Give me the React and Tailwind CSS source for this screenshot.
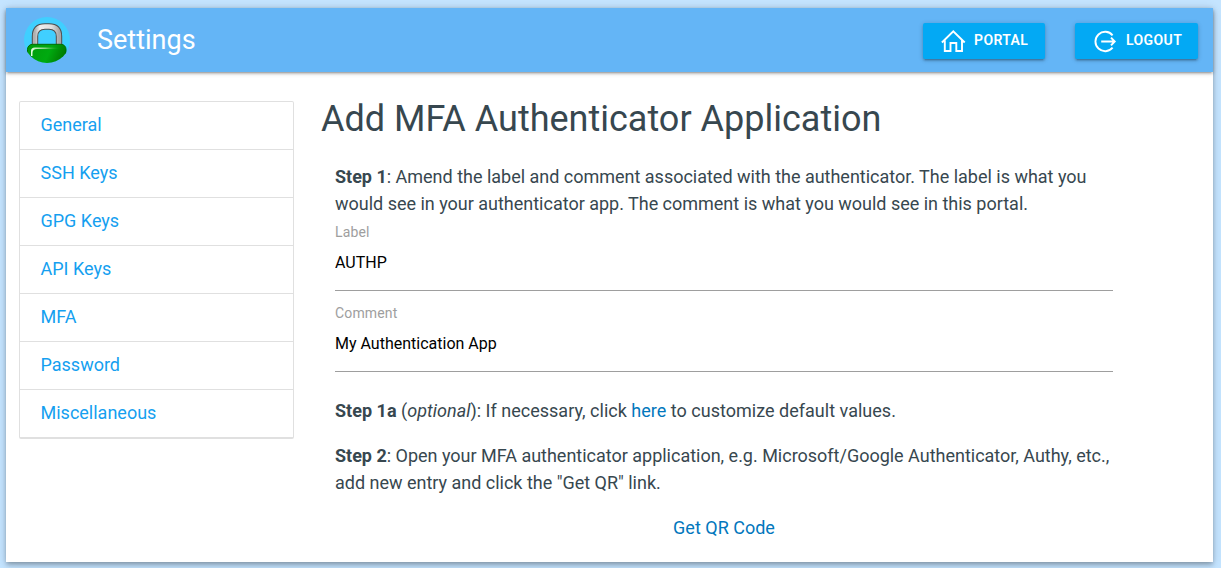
import React from "react";

const links = ["General", "SSH Keys", "GPG Keys", "API Keys", "MFA", "Password", "Miscellaneous"];

function Logo() {
  return (
    <svg viewBox="0 0 46 46" className="size-[46px]">
      <defs>
        <clipPath id="disc"><circle cx="23" cy="23" r="23" /></clipPath>
        <linearGradient id="steel" x1="0" x2="1" y1="0" y2="0">
          <stop offset="0" stopColor="#b0b0b0" />
          <stop offset=".2" stopColor="#eeeeee" />
          <stop offset=".7" stopColor="#dedede" />
          <stop offset="1" stopColor="#a8a8a8" />
        </linearGradient>
        <linearGradient id="body" x1="0" x2="1" y1="0" y2=".3">
          <stop offset="0" stopColor="#009c0a" />
          <stop offset=".6" stopColor="#00aa10" />
          <stop offset="1" stopColor="#007a00" />
        </linearGradient>
        <linearGradient id="shine" x1="0" x2="1" y1="0" y2="0">
          <stop offset="0" stopColor="#e4ffe0" />
          <stop offset=".5" stopColor="#7fd07a" />
          <stop offset="1" stopColor="#00a010" stopOpacity="0" />
        </linearGradient>
      </defs>
      <g clipPath="url(#disc)">
        <rect width="46" height="46" fill="#40cfff" />
        <path d="M11 30V19.500Q11 9.500 21 9.500H25Q35 9.500 35 19.500V30" fill="none" stroke="#4d4d4d" strokeWidth="6.400" />
        <path d="M11 30V19.500Q11 9.500 21 9.500H25Q35 9.500 35 19.500V30" fill="none" stroke="url(#steel)" strokeWidth="4.400" />
        <rect x="3.500" y="27.300" width="38.500" height="26" rx="5" fill="url(#body)" stroke="#006d00" />
        <path d="M7 39V34Q7 30.500 11 30.500H36V32H13Q8.500 32 8.500 36V39Z" fill="url(#shine)" />
      </g>
    </svg>
  );
}

function HomeIcon() {
  return (
    <svg viewBox="0 0 24 24" className="size-6 overflow-visible" fill="none" stroke="white" strokeWidth="1.900">
      <path d="M.9 13.500 12.300 2.300 23.700 13.500M3.800 11.500V22H9.500V14H15.300V22H21V11.500" />
    </svg>
  );
}

function LogoutIcon() {
  return (
    <svg viewBox="0 0 24 24" className="size-6" fill="none" stroke="white" strokeWidth="1.900">
      <path d="M19.600 6.300A9.700 9.700 0 1 0 19.600 18.700M8.200 12.500H21.500M18 8.700 21.700 12.500 18 16.300" />
    </svg>
  );
}

function NavButton({ icon, children, className }) {
  return (
    <a className={"flex h-9 items-center rounded-[2px] bg-[#03a9f4] pl-[18px] text-[14px] font-semibold tracking-[0.4px] text-white shadow-[0_2px_2px_0_rgba(0,0,0,0.14),0_3px_1px_-2px_rgba(0,0,0,0.12),0_1px_5px_0_rgba(0,0,0,0.2)] " + className}>
      {icon}
      <span className="mb-[2px] ml-[9px]">{children}</span>
    </a>
  );
}

function Field({ label, value }) {
  return (
    <label className="block h-[81px]">
      <span className="block pt-[6px] text-[14px] leading-[18px] tracking-[0.15px] text-[#9e9e9e]">{label}</span>
      <input defaultValue={value} className="block h-[50px] w-full border-b border-[#9e9e9e] bg-transparent pb-[7px] text-[16px] text-black outline-none" />
    </label>
  );
}

export default function App() {
  return (
    <div className="h-[568px] overflow-hidden bg-[#c4e4ff] pt-2 pl-[6px] font-[Roboto,sans-serif] text-[18px] leading-[27px] text-[#37474f]">
      <div className="h-[554px] w-[1207px] bg-white shadow-[0_4px_5px_0_rgba(0,0,0,0.14),0_1px_10px_0_rgba(0,0,0,0.12),0_2px_4px_-1px_rgba(0,0,0,0.2)]">
        <header className="flex h-16 items-center bg-[#64b5f6] pr-[15px] pl-[18px] shadow-[0_2px_2px_0_rgba(0,0,0,0.14),0_3px_1px_-2px_rgba(0,0,0,0.12),0_1px_5px_0_rgba(0,0,0,0.2)]">
          <Logo />
          <span className="ml-[27px] text-[27px] text-white">Settings</span>
          <div className="mt-[2px] ml-auto flex gap-[30px]">
            <NavButton icon={<HomeIcon />} className="w-[122px]">PORTAL</NavButton>
            <NavButton icon={<LogoutIcon />} className="w-[123px]">LOGOUT</NavButton>
          </div>
        </header>
        <div className="flex">
          <nav className="mt-[29px] ml-[13px] h-[338px] w-[275px] rounded-[2px] border border-b-2 border-[#e0e0e0]">
            {links.map((t) => (
              <a key={t} className="block h-12 border-b border-[#e0e0e0] pt-[9px] pl-[20.500px] text-[#159ff0] last:border-b-0">{t}</a>
            ))}
          </nav>
          <main className="ml-7 w-[791px] pt-[26px]">
            <h1 className="-ml-px text-[36px] leading-[43px]">Add MFA Authenticator Application</h1>
            <div className="pl-[13px]">
              <p className="mt-[22px] tracking-[-0.01px]">
                <b>Step 1</b>: Amend the label and comment associated with the authenticator. The label is what you<br />would see in your authenticator app. The comment is what you would see in this portal.
              </p>
              <Field label="Label" value="AUTHP" />
              <Field label="Comment" value="My Authentication App" />
              <p className="mt-[18px] tracking-[0.015px]">
                <b>Step 1a</b> (<i>optional</i>): If necessary, click <a className="text-[#0277bd]">here</a> to customize default values.
              </p>
              <p className="mt-[18px] tracking-[-0.01px] whitespace-nowrap">
                <b>Step 2</b>: Open your MFA authenticator application, e.g. Microsoft/Google Authenticator, Authy, etc.,<br />add new entry and click the "Get QR" link.
              </p>
              <p className="mt-[18px] text-center"><a className="text-[#0277bd]">Get QR Code</a></p>
            </div>
          </main>
        </div>
      </div>
    </div>
  );
}
